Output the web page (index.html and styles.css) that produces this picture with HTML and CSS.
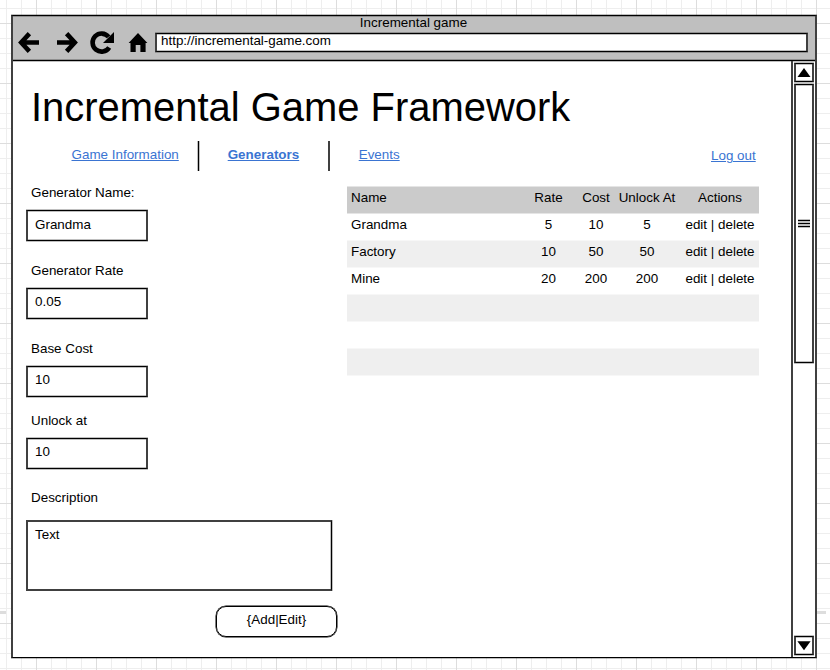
FILE: index.html
```html
<!DOCTYPE html>
<html lang="en">
<head>
<meta charset="utf-8">
<title>Incremental game</title>
<link rel="stylesheet" href="styles.css">
</head>
<body>
<div class="window">
  <header class="chrome">
    <div class="window-title">Incremental game</div>
    <div class="toolbar">
      <svg class="icons" width="142" height="30" viewBox="13 29 142 30">
        <g fill="none" stroke="#000" stroke-width="4.6">
          <path d="M29.4 33.6L21.2 42.5L29.4 51.4M21 42.5H39"/>
          <path d="M66.6 33.6L74.8 42.5L66.6 51.4M75 42.5H57"/>
          <path d="M108.6 36.9A9 9 0 1 0 109.2 47.4"/>
        </g>
        <path d="M114 32V43H103Z"/>
        <path d="M138 33L147.4 43H145.6V52H140.4V45H135.7V52H130.5V43H128.6Z"/>
      </svg>
      <div class="address">http://incremental-game.com</div>
    </div>
  </header>
  <div class="viewport">
    <main class="page">
      <h1>Incremental Game Framework</h1>
      <nav>
        <a class="info">Game Information</a>
        <a class="generators">Generators</a>
        <a class="events">Events</a>
        <a class="logout">Log out</a>
      </nav>
      <div class="columns">
        <form>
          <label>Generator Name:</label>
          <div class="field name">Grandma</div>
          <label>Generator Rate</label>
          <div class="field">0.05</div>
          <label>Base Cost</label>
          <div class="field cost">10</div>
          <label>Unlock at</label>
          <div class="field unlock">10</div>
          <label>Description</label>
          <div class="area">Text</div>
          <div class="button">{Add|Edit}</div>
        </form>
        <div class="table">
          <div class="row head"><span>Name</span><span>Rate</span><span>Cost</span><span>Unlock At</span><span>Actions</span></div>
          <div class="row after-head"><span>Grandma</span><span>5</span><span>10</span><span>5</span><span>edit | delete</span></div>
          <div class="row stripe"><span>Factory</span><span>10</span><span>50</span><span>50</span><span>edit | delete</span></div>
          <div class="row after"><span>Mine</span><span>20</span><span>200</span><span>200</span><span>edit | delete</span></div>
          <div class="row stripe"></div>
          <div class="row after"></div>
          <div class="row stripe"></div>
          <div class="row after"></div>
        </div>
      </div>
    </main>
    <aside class="scrollbar">
      <div class="arrow"><svg width="16" height="17" viewBox="0 0 16 17"><path d="M8 4L14.5 13H1.5Z"/></svg></div>
      <div class="thumb"><i></i><i></i><i></i></div>
      <div class="arrow down"><svg width="16" height="17" viewBox="0 0 16 17"><path d="M8 13.2L14.6 4.3H1.4Z"/></svg></div>
    </aside>
  </div>
</div>
</body>
</html>
```
FILE: styles.css
```css
* { box-sizing: border-box; }

body {
  margin: 0;
  width: 830px;
  height: 670px;
  overflow: hidden;
  padding: 15px 0 0 11px;
  font: 13.42px/15px "Liberation Sans", Arial, sans-serif;
  color: #000;
  background-color: #fff;
  /* page break dashes, then the major and minor grid lines */
  background-image:
    linear-gradient(#ddd, #ddd), linear-gradient(#ddd, #ddd),
    linear-gradient(90deg, #ddd 1px, transparent 1px),
    linear-gradient(#ddd 1px, transparent 1px),
    linear-gradient(90deg, #eee 1px, transparent 1px),
    linear-gradient(#eee 1px, transparent 1px);
  background-size: 6px 3px, 9px 3px, 60px 60px, 60px 60px, 15px 15px, 15px 15px;
  background-position: 0 611px, 817px 611px, 36px 0, 0 23px, 6px 0, 0 8px;
  background-repeat: no-repeat, no-repeat, repeat, repeat, repeat, repeat;
}

.window {
  width: 806px;
  height: 643px;
  background: #fff;
  border: solid #404040;
  border-width: 1px 2px;
  border-top-color: #000;
  border-bottom-color: #000;
  box-shadow: 0 -1px rgba(0,0,0,.25), 0 1px rgba(0,0,0,.25);
}

.chrome {
  height: 45px;
  background: #bfbfbf;
  border-bottom: 1px solid #000;
  box-shadow: inset 0 1px rgba(0,0,0,.25), inset 0 -1px rgba(0,0,0,.25), 0 1px rgba(0,0,0,.25);
}
.window-title { height: 13px; line-height: 13px; text-align: center; padding-right: 1px; }
.toolbar { display: flex; }
.icons { display: block; flex: none; }
.address {
  margin-top: 4px;
  width: 653px;
  height: 19px;
  background: #fff;
  border: solid #000;
  border-width: 1px 2px;
  border-left-color: #404040;
  border-right-color: #404040;
  padding-left: 4px;
  line-height: 13px;
  box-shadow: 0 -1px rgba(0,0,0,.25), 0 1px rgba(0,0,0,.25), inset 0 1px rgba(0,0,0,.25), inset 0 -1px rgba(0,0,0,.25);
}

.viewport { display: flex; height: 596px; }
.page { width: 778px; }
h1 {
  margin: 0;
  padding: 23px 0 0 18px;
  height: 80px;
  font-size: 39.95px;
  line-height: 46px;
  font-weight: 400;
  white-space: nowrap;
}

nav { display: flex; height: 30px; padding-left: 58.5px; }
nav a {
  height: 30px;
  padding-top: 6px;
  color: #3a74d2;
  text-decoration: underline;
  white-space: nowrap;
}
.info { width: 127.5px; border-right: 1px solid #000; box-shadow: 1px 0 rgba(0,0,0,.25), inset -1px 0 rgba(0,0,0,.25); }
.generators { width: 131px; padding-left: 28.7px; font-weight: 700; border-right: 2px solid #404040; }
.events { padding-left: 28.7px; width: 340px; }
nav .logout { margin-left: 41px; padding-top: 7px; }

/* the link row runs to the right edge of the page */
nav .events { flex: none; }
nav .info, nav .generators, nav .logout { flex: none; }

.columns { display: flex; padding: 14px 0 0 13px; }
form { width: 321px; display: flex; flex-direction: column; }
label { padding-left: 5px; height: 15px; margin-bottom: 10px; }
.field {
  width: 122px;
  height: 31px;
  margin-bottom: 22px;
  padding: 5px 0 0 7px;
  border: solid #404040;
  border-width: 1px 2px;
  border-top-color: #000;
  border-bottom-color: #000;
  box-shadow: 0 -1px rgba(0,0,0,.25), 0 1px rgba(0,0,0,.25), inset 0 1px rgba(0,0,0,.25), inset 0 -1px rgba(0,0,0,.25);
}
.field.name { padding-top: 6px; }
.field.cost { margin-bottom: 16px; }
.field.unlock { margin-bottom: 21px; }
.area {
  margin-top: 5px;
  width: 306px;
  height: 71px;
  padding: 5px 0 0 7px;
  border: 2px solid #404040;
  border-right: 1px solid #000;
  box-shadow: 1px 0 rgba(0,0,0,.25), inset -1px 0 rgba(0,0,0,.25);
}
.button {
  margin: 15px 0 0 189.5px;
  width: 121px;
  height: 31px;
  padding: 5px 0 0 1px;
  text-align: center;
  border: 1px solid #000;
  border-radius: 10px;
  box-shadow: 0 0 0 .5px #000;
}

.table { width: 412px; padding-top: 1px; }
.row {
  display: grid;
  grid-template-columns: 176px 51px 44px 58px 83px;
  height: 27px;
  padding-top: 4px;
  text-align: center;
  white-space: nowrap;
}
.row span:first-child { text-align: left; padding-left: 4px; }
.row span:last-child { padding-left: 5px; }
.head { background: linear-gradient(#e5e5e5 1px, #cbcbcb 1px); }
.after-head { background: linear-gradient(#e5e5e5 1px, transparent 1px); }
.stripe { background: linear-gradient(#f7f7f7 1px, #efefef 1px); }
.after { background: linear-gradient(#f7f7f7 1px, transparent 1px); }

.scrollbar {
  width: 24px;
  display: flex;
  flex-direction: column;
  padding: 2px 1px 2px 1px;
  border-left: 2px solid #404040;
}
.arrow, .thumb {
  width: 20px;
  border: solid #404040;
  border-width: 1px 2px;
  border-top-color: #000;
  border-bottom-color: #000;
  box-shadow: 0 -1px rgba(0,0,0,.25), 0 1px rgba(0,0,0,.25), inset 0 1px rgba(0,0,0,.25), inset 0 -1px rgba(0,0,0,.25);
}
.arrow { height: 19px; }
.arrow svg { display: block; }
.down { margin-top: auto; }
.thumb {
  height: 279px;
  margin-top: 2px;
  display: flex;
  flex-direction: column;
  align-items: center;
  justify-content: center;
  gap: 2px;
}
.thumb i { width: 12px; height: 1px; background: #000; box-shadow: 0 1px rgba(0,0,0,.25), 0 -1px rgba(0,0,0,.25); }
```
